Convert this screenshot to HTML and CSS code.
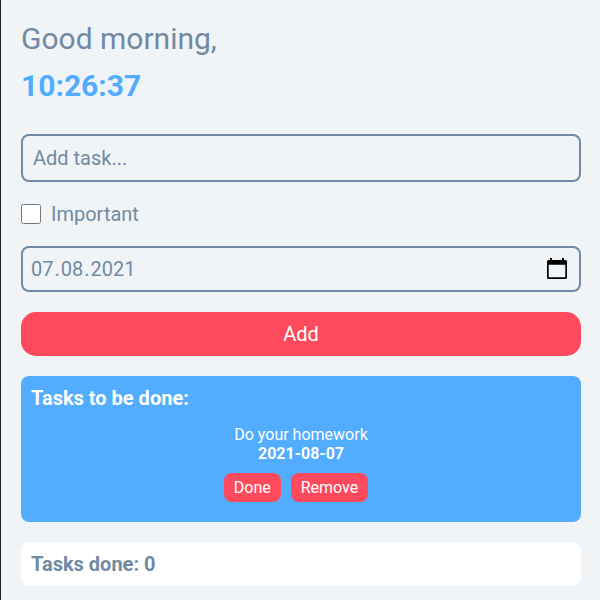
FILE: index.html
```html
<!DOCTYPE html>
<html lang="en">
<head>
<meta charset="utf-8">
<title>Tasks</title>
<link rel="stylesheet" href="styles.css">
</head>
<body>
<main class="app">
  <h1 class="greeting">Good morning,</h1>
  <p class="clock">10:26:37</p>
  <form class="form">
    <input class="field task-input" type="text" placeholder="Add task...">
    <label class="important"><input class="checkbox" type="checkbox"><span>Important</span></label>
    <div class="field date">
      <div><span class="part">07</span>.<span class="part">08</span>.<span class="part">2021</span></div>
      <svg class="calendar" viewBox="0 0 20 21"><path fill-rule="evenodd" d="M3 0h2v2h10V0h2v2h1.5A1.500 1.500 0 0 1 20 3.500V19.500A1.500 1.500 0 0 1 18.500 21H1.500A1.500 1.500 0 0 1 0 19.500V3.500A1.500 1.500 0 0 1 1.500 2H3zM1.700 6.700V19.300H18.300V6.700z"/></svg>
    </div>
    <button class="add" type="button">Add</button>
  </form>
  <section class="panel todo">
    <h2 class="title">Tasks to be done:</h2>
    <div class="task">
      <span>Do your homework</span>
      <strong>2021-08-07</strong>
      <div class="actions"><button class="small" type="button">Done</button><button class="small" type="button">Remove</button></div>
    </div>
  </section>
  <section class="panel done">
    <h2 class="title">Tasks done: 0</h2>
  </section>
</main>
</body>
</html>
```
FILE: styles.css
```css
* {
  box-sizing: border-box;
  margin: 0;
  padding: 0;
  font-family: Roboto, sans-serif;
}

body {
  background: #f0f4f7;
  color: #708aa3;
  font-size: 20px;
}

.app {
  min-height: 600px;
  border-left: 1px solid #202124;
  padding: 20px 19px 0 20px;
}

.greeting {
  font-size: 30px;
  font-weight: 400;
  line-height: 37px;
}

.clock {
  margin-top: 10px;
  font-size: 30px;
  font-weight: 700;
  line-height: 37px;
  color: #52acff;
}

.form {
  display: flex;
  flex-direction: column;
  gap: 20px;
  margin-top: 30px;
}

.field {
  width: 100%;
  border: 2px solid #708aa3;
  border-radius: 8px;
  background: transparent;
  color: #708aa3;
  font-size: 20px;
}

.task-input {
  height: 48px;
  padding: 0 10px;
}

.task-input::placeholder {
  color: #708aa3;
  opacity: 1;
}

.important {
  display: flex;
  align-items: center;
  gap: 10px;
  height: 24px;
}

.checkbox {
  width: 20px;
  height: 20px;
}

.date {
  display: flex;
  align-items: center;
  justify-content: space-between;
  height: 46px;
  padding: 0 12px 0 7px;
}

.part {
  padding: 0 1px;
}

.calendar {
  width: 20px;
  height: 21px;
  margin-bottom: 1px;
  fill: #000;
}

.add {
  height: 44px;
  border: 0;
  border-radius: 15px;
  background: #ff4a5d;
  color: #fff;
  font-size: 20px;
}

.panel {
  margin-top: 20px;
  padding: 10px;
  border-radius: 8px;
}

.todo {
  height: 146px;
  background: #52acff;
  color: #fff;
}

.done {
  height: 44px;
  background: #fff;
}

.title {
  font-size: 20px;
  font-weight: 700;
  line-height: 24px;
}

.task {
  display: flex;
  flex-direction: column;
  align-items: center;
  margin-top: 15px;
  font-size: 16px;
  line-height: 19px;
}

.actions {
  display: flex;
  gap: 10px;
  margin-top: 10px;
  margin-right: 10px;
}

.small {
  height: 29px;
  padding: 0 10px;
  border: 0;
  border-radius: 8px;
  background: #ff4a5d;
  color: #fff;
  font-size: 16px;
}
```
